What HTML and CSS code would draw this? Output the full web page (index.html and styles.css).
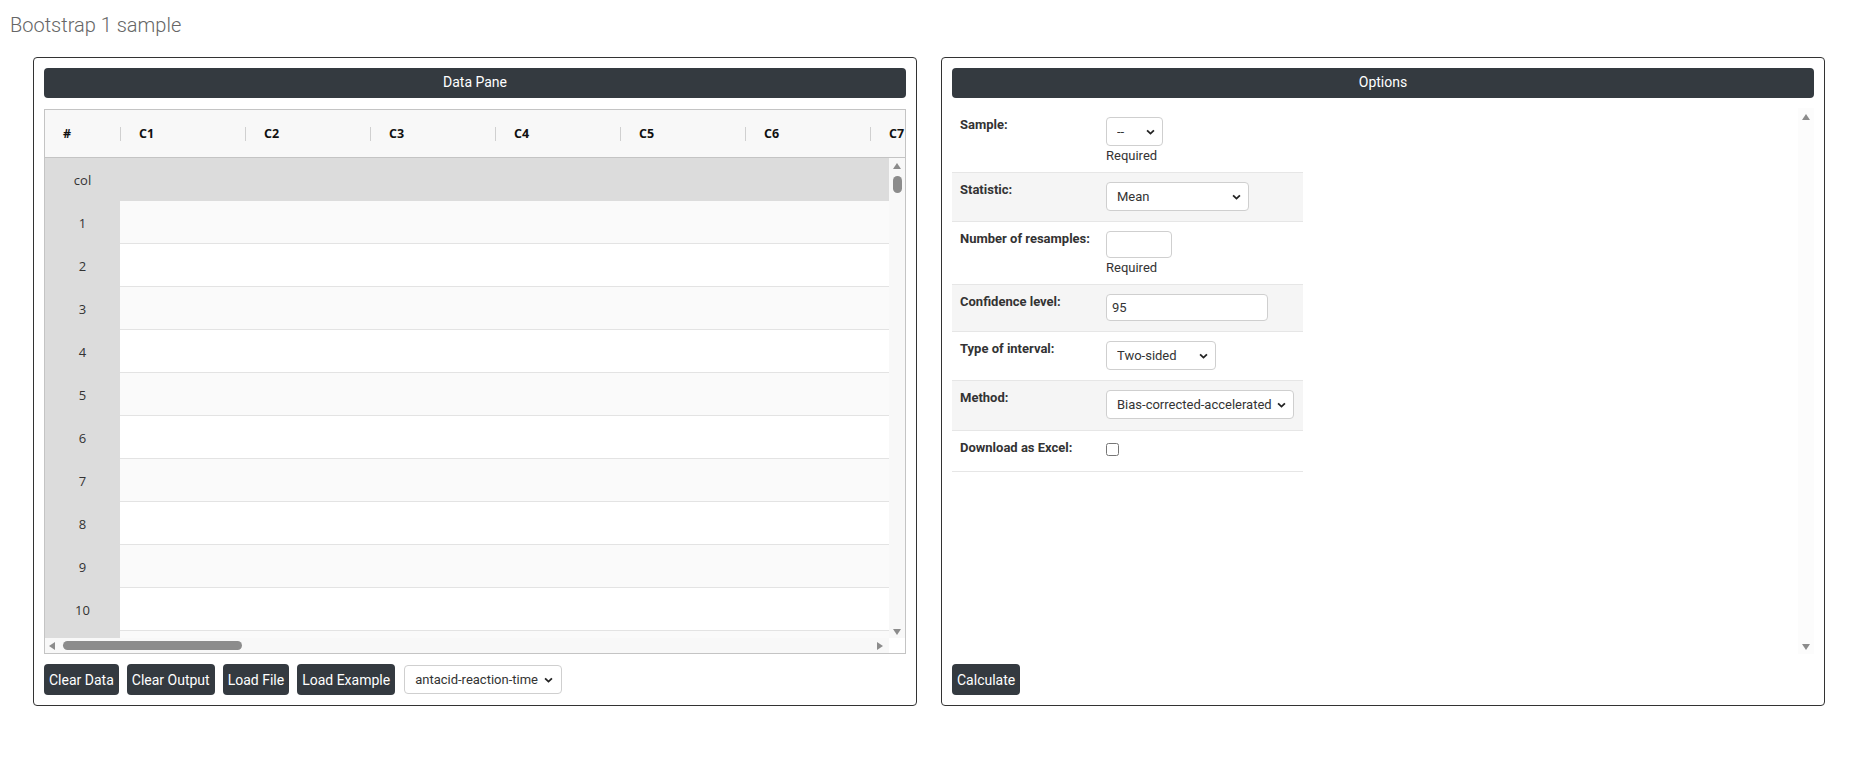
FILE: index.html
```html
<!DOCTYPE html>
<html lang="en">
<head>
  <meta charset="UTF-8">
  <meta name="viewport" content="width=device-width, initial-scale=1.0">
  <title>Bootstrap 1 sample</title>
  <link rel="stylesheet" href="styles.css">
</head>
<body>
  <h1 class="page-title">Bootstrap 1 sample</h1>

  <div class="panels">
    <!-- Data pane -->
    <section class="panel">
      <div class="panel-head">Data Pane</div>

      <div class="grid">
        <div class="grid-head">
          <div class="hcell rowhead">#</div>
          <div class="hcell">C1</div>
          <div class="hcell">C2</div>
          <div class="hcell">C3</div>
          <div class="hcell">C4</div>
          <div class="hcell">C5</div>
          <div class="hcell">C6</div>
          <div class="hcell">C7</div>
        </div>

        <div class="grid-main">
          <div class="grid-body">
            <div class="grow colrow"><div class="rh">col</div><div class="cells"></div></div>
            <div class="grow odd"><div class="rh">1</div><div class="cells"></div></div>
            <div class="grow"><div class="rh">2</div><div class="cells"></div></div>
            <div class="grow odd"><div class="rh">3</div><div class="cells"></div></div>
            <div class="grow"><div class="rh">4</div><div class="cells"></div></div>
            <div class="grow odd"><div class="rh">5</div><div class="cells"></div></div>
            <div class="grow"><div class="rh">6</div><div class="cells"></div></div>
            <div class="grow odd"><div class="rh">7</div><div class="cells"></div></div>
            <div class="grow"><div class="rh">8</div><div class="cells"></div></div>
            <div class="grow odd"><div class="rh">9</div><div class="cells"></div></div>
            <div class="grow"><div class="rh">10</div><div class="cells"></div></div>
            <div class="grow odd"><div class="rh"></div><div class="cells"></div></div>
          </div>
          <div class="vscroll">
            <span class="arrow up"></span>
            <span class="vthumb"></span>
            <span class="fill"></span>
            <span class="arrow down"></span>
          </div>
        </div>

        <div class="hscroll">
          <span class="arrow left"></span>
          <span class="hthumb"></span>
          <span class="fill"></span>
          <span class="arrow right"></span>
          <span class="corner"></span>
        </div>
      </div>

      <div class="toolbar">
        <button class="btn">Clear Data</button>
        <button class="btn">Clear Output</button>
        <button class="btn">Load File</button>
        <button class="btn">Load Example</button>
        <span class="select-wrap example">
          <select class="select example-select">
            <option>antacid-reaction-time</option>
          </select>
          <svg class="chev" viewBox="0 0 10 6"><path d="M1.2 1.2 5 4.8 8.8 1.2"/></svg>
        </span>
      </div>
    </section>

    <!-- Options pane -->
    <section class="panel">
      <div class="panel-head">Options</div>

      <div class="options">
        <form class="opt-form">
          <div class="opt-row h-sample">
            <label class="opt-label">Sample:</label>
            <div class="opt-field">
              <span class="select-wrap">
                <select class="select w-sample"><option>--</option></select>
                <svg class="chev" viewBox="0 0 10 6"><path d="M1.2 1.2 5 4.8 8.8 1.2"/></svg>
              </span>
              <div class="hint">Required</div>
            </div>
          </div>
          <div class="opt-row shade h-stat">
            <label class="opt-label">Statistic:</label>
            <div class="opt-field">
              <span class="select-wrap">
                <select class="select w-stat"><option>Mean</option></select>
                <svg class="chev" viewBox="0 0 10 6"><path d="M1.2 1.2 5 4.8 8.8 1.2"/></svg>
              </span>
            </div>
          </div>
          <div class="opt-row h-resamples">
            <label class="opt-label">Number of resamples:</label>
            <div class="opt-field">
              <input class="text-input w-resamples" type="text">
              <div class="hint">Required</div>
            </div>
          </div>
          <div class="opt-row shade h-conf">
            <label class="opt-label">Confidence level:</label>
            <div class="opt-field">
              <input class="text-input w-conf" type="text" value="95">
            </div>
          </div>
          <div class="opt-row h-type">
            <label class="opt-label">Type of interval:</label>
            <div class="opt-field">
              <span class="select-wrap">
                <select class="select w-type"><option>Two-sided</option></select>
                <svg class="chev" viewBox="0 0 10 6"><path d="M1.2 1.2 5 4.8 8.8 1.2"/></svg>
              </span>
            </div>
          </div>
          <div class="opt-row shade h-method">
            <label class="opt-label">Method:</label>
            <div class="opt-field">
              <span class="select-wrap">
                <select class="select w-method"><option>Bias-corrected-accelerated</option></select>
                <svg class="chev" viewBox="0 0 10 6"><path d="M1.2 1.2 5 4.8 8.8 1.2"/></svg>
              </span>
            </div>
          </div>
          <div class="opt-row h-excel">
            <label class="opt-label">Download as Excel:</label>
            <div class="opt-field">
              <input class="check" type="checkbox">
            </div>
          </div>
        </form>

        <div class="vscroll light">
          <span class="arrow up"></span>
          <span class="fill"></span>
          <span class="arrow down"></span>
        </div>
      </div>

      <div class="toolbar">
        <button class="btn">Calculate</button>
      </div>
    </section>
  </div>
</body>
</html>
```

FILE: styles.css
```css
/* Base */
body {
  margin: 0;
  font-family: Roboto, "Liberation Sans", sans-serif;
  color: #333;
  background: #fff;
}

.page-title {
  margin: 13px 10px 19px;
  font-size: 20px;
  line-height: 25px;
  font-weight: 300;
  color: #666;
}

.panels {
  display: flex;
  gap: 24px;
  padding-left: 33px;
}

.panel {
  width: 884px;
  box-sizing: border-box;
  border: 1px solid #333;
  border-radius: 4px;
  padding: 10px;
}

.panel-head {
  height: 30px;
  line-height: 29px;
  background: #343a40;
  color: #fff;
  border-radius: 4px;
  text-align: center;
  font-size: 14px;
}

/* Data grid */
.grid {
  margin-top: 11px;
  height: 545px;
  box-sizing: border-box;
  border: 1px solid #c4c4c4;
  display: flex;
  flex-direction: column;
  font-family: "Open Sans", "Liberation Sans", sans-serif;
  font-size: 13px;
}

.grid-head {
  height: 48px;
  flex: none;
  box-sizing: border-box;
  border-bottom: 1px solid #c4c4c4;
  background: #f8f8f8;
  display: flex;
  overflow: hidden;
  font-size: 12.5px;
}

.hcell {
  flex: none;
  width: 125px;
  display: flex;
  align-items: center;
  font-weight: 700;
  color: #111;
}

.hcell::before {
  content: "";
  width: 1px;
  height: 14px;
  background: #d0d0d0;
  margin-right: 18px;
}

.hcell.rowhead {
  width: 75px;
}

.hcell.rowhead::before {
  width: 0;
}

.grid-main {
  height: 480px;
  flex: none;
  display: flex;
}

.grid-body {
  flex: 1;
  overflow: hidden;
}

.grow {
  height: 43px;
  display: flex;
  background: #fff;
}

.grow.odd {
  background: #fafafa;
}

.rh {
  width: 75px;
  flex: none;
  background: #dcdcdc;
  color: #333;
  display: flex;
  align-items: center;
  justify-content: center;
}

.cells {
  flex: 1;
  border-bottom: 1px solid #e3e3e3;
}

.grow.colrow {
  background: #dcdcdc;
}

.grow.colrow .cells {
  border-bottom: none;
}

/* Scrollbars */
.vscroll {
  width: 16px;
  flex: none;
  background: #f8f8f8;
  display: flex;
  flex-direction: column;
  align-items: center;
  padding: 5px 0 3px;
  box-sizing: border-box;
}

.vscroll.light {
  background: #fcfcfc;
  padding: 6px 0 4px;
}

.fill {
  flex: 1;
}

.arrow {
  width: 0;
  height: 0;
  flex: none;
}

.arrow.up {
  border-left: 4px solid transparent;
  border-right: 4px solid transparent;
  border-bottom: 6px solid #8c8c8c;
}

.arrow.down {
  border-left: 4px solid transparent;
  border-right: 4px solid transparent;
  border-top: 6px solid #8c8c8c;
}

.arrow.left {
  border-top: 4px solid transparent;
  border-bottom: 4px solid transparent;
  border-right: 6px solid #8c8c8c;
}

.arrow.right {
  border-top: 4px solid transparent;
  border-bottom: 4px solid transparent;
  border-left: 6px solid #8c8c8c;
}

.vthumb {
  width: 9px;
  height: 17px;
  margin-top: 7px;
  border-radius: 5px;
  background: #8c8c8c;
}

.hscroll {
  height: 15px;
  flex: none;
  display: flex;
  align-items: center;
  padding-left: 4px;
  background: #f8f8f8;
}

.hthumb {
  width: 179px;
  height: 9px;
  margin-left: 8px;
  border-radius: 5px;
  background: #8c8c8c;
}

.hscroll .arrow.right {
  margin-right: 6px;
}

.corner {
  width: 16px;
  align-self: stretch;
  background: #fff;
}

/* Toolbar */
.toolbar {
  margin-top: 10px;
  height: 31px;
  display: flex;
  align-items: center;
  gap: 8px;
}

.btn {
  height: 31px;
  padding: 0 5px;
  border: none;
  border-radius: 4px;
  background: #343a40;
  color: #fff;
  font-family: Roboto, "Liberation Sans", sans-serif;
  font-size: 14px;
}

.select-wrap {
  position: relative;
  display: inline-block;
}

.select-wrap.example {
  margin-left: 1px;
}

.select {
  appearance: none;
  height: 29px;
  box-sizing: border-box;
  border: 1px solid #cfcfcf;
  border-radius: 4px;
  background: #fff;
  padding: 0 20px 0 10px;
  font-family: Roboto, "Liberation Sans", sans-serif;
  font-size: 13px;
  color: #333;
}

.chev {
  position: absolute;
  right: 8px;
  top: 12px;
  width: 9px;
  height: 6px;
  fill: none;
  stroke: #222;
  stroke-width: 2;
  pointer-events: none;
}

.example-select {
  width: 158px;
}

.example-select + .chev {
  right: 9px;
}

/* Options form */
.options {
  margin-top: 10px;
  height: 546px;
  display: flex;
}

.opt-form {
  width: 351px;
  margin: 0;
}

.opt-form + .vscroll {
  margin-left: auto;
}

.opt-row {
  display: flex;
  box-sizing: border-box;
  padding: 9px 8px 0;
  border-bottom: 1px solid #e6e6e6;
}

.opt-row.shade {
  background: #f5f5f5;
}

.h-sample { height: 65px; }
.h-stat { height: 49px; }
.h-resamples { height: 63px; }
.h-conf { height: 47px; }
.h-type { height: 49px; }
.h-method { height: 50px; }
.h-excel { height: 41px; }

.opt-label {
  width: 146px;
  flex: none;
  font-size: 13px;
  line-height: 16px;
  font-weight: 700;
  color: #333;
}

.hint {
  font-size: 13px;
  line-height: 16px;
  margin-top: 2px;
  color: #333;
}

.text-input {
  height: 27px;
  box-sizing: border-box;
  border: 1px solid #cfcfcf;
  border-radius: 4px;
  padding: 0 5px;
  font-family: Roboto, "Liberation Sans", sans-serif;
  font-size: 13px;
  color: #333;
  display: block;
}

.w-sample { width: 57px; }
.w-stat { width: 143px; }
.w-type { width: 110px; }
.w-method { width: 188px; }
.w-resamples { width: 66px; }
.w-conf { width: 162px; }

.check {
  display: block;
  width: 13px;
  height: 13px;
  margin: 3px 0 0;
}
```
